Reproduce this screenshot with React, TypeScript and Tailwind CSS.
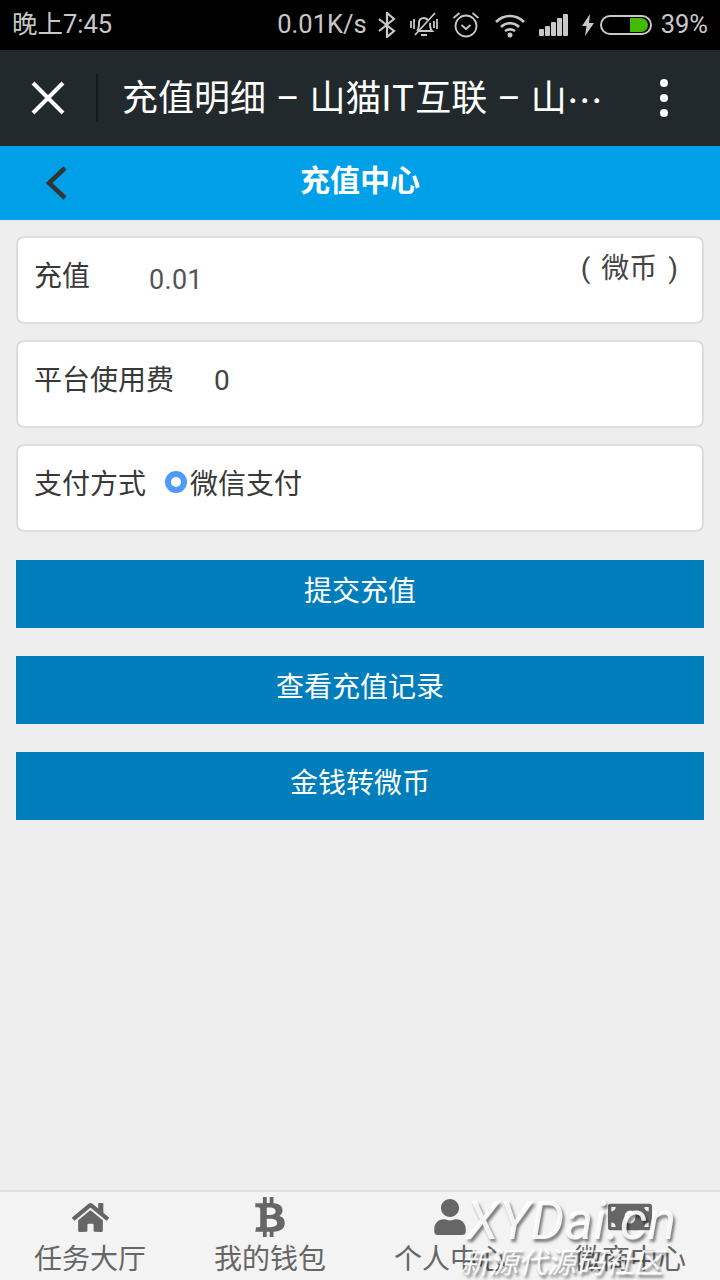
import { FaBtc, FaHome, FaMoneyBill, FaUser } from "react-icons/fa";

const font = "font-['Roboto','Noto_Sans_CJK_SC',sans-serif]";

function StatusIcons() {
  return (
    <div className="flex items-center text-[#c8c8c8]">
      {/* bluetooth */}
      <svg width="20" height="26" viewBox="0 0 20 26" fill="none" stroke="currentColor" strokeWidth="2.2" className="ml-[10px]">
        <path d="M2 7l15 12-7 6V1l7 6L2 19" />
      </svg>
      {/* muted bell */}
      <svg width="30" height="28" viewBox="0 0 30 28" fill="none" stroke="currentColor" strokeWidth="2" className="ml-[12px]">
        <path d="M8 20c2-2 2-5 2-8 0-3 2-5 5-5 2 0 3 1 4 2M21 12c0 3 0 6 2 8H10M12 24h6" />
        <path d="M26 2L6 24M2 10v7M5 8v10M25 10v7M28 8v10" strokeWidth="1.8" />
      </svg>
      {/* alarm */}
      <svg width="28" height="28" viewBox="0 0 28 28" fill="none" stroke="currentColor" strokeWidth="1.8" className="ml-[13px]">
        <circle cx="14" cy="15" r="10.5" />
        <path d="M9.5 14l4.500 4 4.500-4M1.500 7l6-5M26.500 7l-6-5" />
      </svg>
      {/* wifi */}
      <svg width="32" height="26" viewBox="0 0 32 26" fill="none" stroke="currentColor" strokeWidth="2.600" className="ml-[14px]">
        <path d="M2 10c8-8 20-8 28 0M7 15c5-5 13-5 18 0M11 19c3-2 7-2 10 0" />
        <circle cx="16" cy="23" r="2.500" fill="currentColor" stroke="none" />
      </svg>
      {/* signal */}
      <svg width="29" height="24" viewBox="0 0 29 24" fill="currentColor" className="ml-[13px]">
        <rect x="0" y="16" width="5" height="7" rx="1" />
        <rect x="6" y="13" width="5" height="10" rx="1" />
        <rect x="12" y="9" width="5" height="14" rx="1" />
        <rect x="18" y="5" width="5" height="18" rx="1" />
        <rect x="24" y="1" width="5" height="22" rx="1" />
      </svg>
      {/* charging bolt */}
      <svg width="12" height="22" viewBox="0 0 12 22" fill="currentColor" className="ml-[14px]">
        <path d="M8 0L0 12h4.500L3 22l9-13H7z" />
      </svg>
      {/* battery */}
      <div className="ml-[6px] flex h-[20px] w-[52px] items-center justify-end rounded-full border-2 border-[#c8c8c8] pr-[2px]">
        <div className="h-[14px] w-[18px] rounded-r-full bg-[#44bb00]" />
      </div>
      <span className="ml-[9px] text-[25.5px] leading-none">39%</span>
    </div>
  );
}

function Card({ children }: { children: React.ReactNode }) {
  return (
    <div className="h-[88px] rounded-[8px] border-2 border-[#dcdcdc] bg-white pl-[17px] pr-[23px] text-[28px] text-[#383838]">
      {children}
    </div>
  );
}

function ActionButton({ label }: { label: string }) {
  return (
    <div className="flex h-[68px] items-center justify-center bg-[#007dbb] pb-[5px] text-[28px] text-white">
      {label}
    </div>
  );
}

function Tab({ icon, label }: { icon: React.ReactNode; label: string }) {
  return (
    <div className="flex flex-col items-center">
      <div className="flex h-[50px] items-center text-[#666]">{icon}</div>
      <span className="mt-[3px] text-[28px] leading-[30px] text-[#666]">{label}</span>
    </div>
  );
}

export default function App() {
  return (
    <div className={`relative flex h-[1280px] w-[720px] flex-col overflow-hidden bg-[#eeeeee] ${font}`}>
      <div className="flex h-[50px] shrink-0 items-center justify-between bg-black px-[12px] text-[#c8c8c8]">
        <span className="text-[25.5px] leading-none">晚上7:45</span>
        <div className="flex items-center">
          <span className="text-[25.5px] leading-none">0.01K/s</span>
          <StatusIcons />
        </div>
      </div>

      <div className="flex h-[96px] shrink-0 items-center bg-[#22292c]">
        <svg width="34" height="34" viewBox="0 0 34 34" stroke="white" strokeWidth="4" className="ml-[31px]">
          <path d="M2 2l30 30M32 2L2 32" />
        </svg>
        <div className="ml-[31px] h-[48px] w-[2px] bg-[#16191b]" />
        <div className="ml-[24px] flex w-[482px] items-center whitespace-nowrap pt-[2px] text-[36px] leading-none text-white [word-spacing:1px]">
          <span>
            充值明细 – 山猫<span className="tracking-[1.5px]">IT</span>互联 – 山
          </span>
          <span className="font-['Noto_Sans_CJK_SC',sans-serif]">⋯</span>
        </div>
        <div className="ml-[56px] flex flex-col gap-[7px]">
          <div className="h-[8px] w-[8px] rounded-full bg-white" />
          <div className="h-[8px] w-[8px] rounded-full bg-white" />
          <div className="h-[8px] w-[8px] rounded-full bg-white" />
        </div>
      </div>

      <div className="flex h-[74px] shrink-0 items-center bg-[#00a0e9]">
        <svg width="24" height="36" viewBox="0 0 24 36" fill="none" stroke="#333333" strokeWidth="4.500" className="ml-[45px]">
          <path d="M20 3L4 18l16 15" />
        </svg>
        <span className="mb-[4px] ml-[231px] text-[30px] font-bold leading-none text-white">充值中心</span>
      </div>

      <div className="flex flex-col gap-[16px] px-[16px] pt-[16px]">
        <Card>
          <div className="flex -ml-px">
            <span className="mt-[19px] w-[115px] leading-[40px]">充值</span>
            <span className="mt-[22px] text-[27px] leading-[40px] tracking-[0.3px] text-[#555]">0.01</span>
            <span className="ml-auto mt-[11px] pr-[1px] leading-[40px] text-[#444] [word-spacing:4px]">( 微币 )</span>
          </div>
        </Card>
        <Card>
          <div className="flex -ml-px pt-[19px] leading-[40px]">
            <span className="w-[180px]">平台使用费</span>
            <span className="text-[#444]">0</span>
          </div>
        </Card>
        <Card>
          <div className="flex -ml-px items-center pt-[19px] leading-[40px]">
            <span className="w-[131px]">支付方式</span>
            <span className="mb-[6px] flex h-[22px] w-[22px] items-center justify-center rounded-full bg-[#4c9bfb]">
              <span className="h-[10px] w-[10px] rounded-full bg-white" />
            </span>
            <span className="ml-[3px]">微信支付</span>
          </div>
        </Card>
      </div>

      <div className="flex flex-col gap-[28px] px-[16px] pt-[28px]">
        <ActionButton label="提交充值" />
        <ActionButton label="查看充值记录" />
        <ActionButton label="金钱转微币" />
      </div>

      <div className="mt-auto grid h-[90px] shrink-0 grid-cols-4 border-t-2 border-[#e0e0e0] bg-[#f3f3f3]">
        <Tab icon={<FaHome size={37} />} label="任务大厅" />
        <Tab icon={<FaBtc size={40} />} label="我的钱包" />
        <Tab icon={<FaUser size={36} />} label="个人中心" />
        <Tab icon={<FaMoneyBill size={44} />} label="微商中心" />
      </div>

      {/* site watermark stamped over the tab bar */}
      <div className="absolute left-[460px] top-[1193px] whitespace-nowrap italic text-white/90 [text-shadow:2px_3px_3px_rgba(0,0,0,0.5)]">
        <div className="pl-[6px] text-[54px] leading-[56px]">XYDai.cn</div>
        <div className="text-[29px] leading-[28px]">新源代源码社区</div>
      </div>
    </div>
  );
}
